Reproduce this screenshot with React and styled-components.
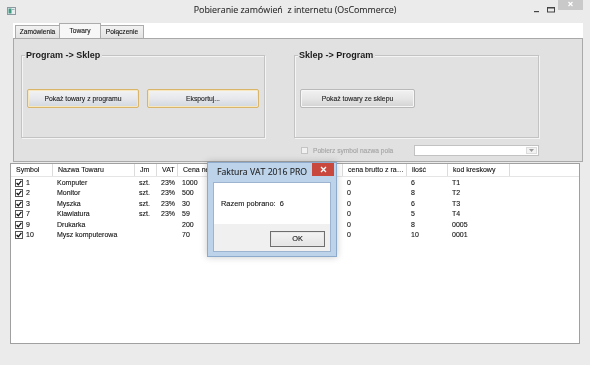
import React from "react";
import styled, { createGlobalStyle } from "styled-components";

const GlobalStyle = createGlobalStyle`
  html, body {
    margin: 0;
    padding: 0;
    background: #ebebeb;
  }
  body {
    font-family: "Liberation Sans", Arial, sans-serif;
    color: #111;
  }
`;

const Window = styled.div`
  position: relative;
  width: 590px;
  height: 365px;
  background: #ebebeb;
  display: flex;
  flex-direction: column;
  overflow: hidden;
  will-change: transform;
  -webkit-text-stroke: 0.1px currentColor;
`;

const TitleBar = styled.div`
  height: 23px;
  display: flex;
  align-items: flex-start;
  flex-shrink: 0;
`;

const TitleSide = styled.div`
  flex: 1;
  display: flex;
  justify-content: ${(p) => (p.$end ? "flex-end" : "flex-start")};
  align-items: flex-start;
  padding: ${(p) => (p.$end ? "0 7px 0 0" : "7px 0 0 7px")};
`;

const TitleText = styled.div`
  font-family: "Open Sans", "Noto Sans", sans-serif;
  font-size: 8.9px;
  line-height: 20px;
  color: #2a2a2a;
  white-space: pre;
`;

const CaptionBtn = styled.div`
  width: ${(p) => p.$w}px;
  height: 10px;
  display: flex;
  align-items: flex-start;
  justify-content: center;
  background: ${(p) => p.$bg || "transparent"};
`;

const Client = styled.div`
  flex: 1;
  display: flex;
  flex-direction: column;
  padding: 0 5px 0 8px;
`;

const TabControl = styled.div`
  margin: 0 2px 0 5px;
  display: flex;
  flex-direction: column;
`;

const TabStrip = styled.div`
  height: 15px;
  background: #fff;
  display: flex;
  align-items: flex-end;
  padding-left: 2px;
`;

const Tab = styled.div`
  width: ${(p) => p.$w}px;
  height: ${(p) => (p.$active ? 15 : 13)}px;
  box-sizing: border-box;
  border: 1px solid #acacac;
  border-bottom: none;
  margin-right: -1px;
  background: ${(p) =>
    p.$active ? "#f7f7f7" : "linear-gradient(#f2f2f2, #e3e3e3)"};
  font-size: 6.6px;
  line-height: ${(p) => (p.$active ? 14 : 12)}px;
  text-align: center;
  position: relative;
  z-index: ${(p) => (p.$active ? 1 : 0)};
`;

const TabPanel = styled.div`
  height: 124px;
  box-sizing: border-box;
  border: 1px solid #a9a9a9;
  background: #e1e1e1;
  padding: 16px 0 0 7px;
  display: flex;
  gap: 29px;
`;

const GroupCol = styled.div`
  display: flex;
  flex-direction: column;
`;

const GroupBox = styled.div`
  position: relative;
  width: ${(p) => p.$w}px;
  height: 83px;
  box-sizing: border-box;
  border: 1px solid #c3c3c3;
  box-shadow: inset 1px 1px 0 #f4f4f4, 1px 1px 0 #f4f4f4;
  padding: 33px 0 0 5px;
  display: flex;
  gap: 8px;
  align-items: flex-start;
`;

const GroupTitle = styled.div`
  position: absolute;
  top: -7px;
  left: 3px;
  padding: 0 2px 0 1px;
  background: #e1e1e1;
  font-size: 9px;
  font-weight: bold;
  line-height: 12px;
  color: #1b1b1b;
  -webkit-text-stroke: 0;
`;

const Button = styled.div`
  width: ${(p) => p.$w}px;
  height: 19px;
  box-sizing: border-box;
  border: 1px solid ${(p) => (p.$accent ? "#d8b56a" : "#b9b9b9")};
  border-radius: 2px;
  background: ${(p) =>
    p.$accent
      ? "linear-gradient(#f3f3f3 0%, #e6e8ec 50%, #d1d6df 100%)"
      : "linear-gradient(#f2f2f2 0%, #e6e6e6 50%, #d3d3d3 100%)"};
  box-shadow: inset 0 0 0 1px ${(p) => (p.$accent ? "#f6e7bf" : "#f6f6f6")};
  font-size: 6.8px;
  line-height: 17px;
  text-align: center;
  color: #1a1a1a;
  white-space: nowrap;
`;

const OptionsRow = styled.div`
  margin-top: 7px;
  display: flex;
  align-items: center;
  justify-content: space-between;
  padding-left: 7px;
  height: 11px;
`;

const DisabledCheck = styled.label`
  display: flex;
  align-items: center;
  gap: 5px;
  font-size: 6.6px;
  color: #a3a3a3;
`;

const CheckSquare = styled.span`
  width: ${(p) => p.$size}px;
  height: ${(p) => p.$size}px;
  box-sizing: border-box;
  border: 1px solid ${(p) => (p.$disabled ? "#c4c4c4" : "#555")};
  background: ${(p) => (p.$disabled ? "#f1f1f1" : "#fff")};
  display: inline-flex;
  align-items: center;
  justify-content: center;
  flex-shrink: 0;
`;

const Combo = styled.div`
  width: 125px;
  height: 11px;
  box-sizing: border-box;
  border: 1px solid #c2c2c2;
  background: #fff;
  display: flex;
  justify-content: flex-end;
  align-items: stretch;
`;

const ComboArrow = styled.div`
  width: 9px;
  margin: 1px;
  border: 1px solid #dcdcdc;
  background: #f2f2f2;
  display: flex;
  align-items: center;
  justify-content: center;
`;

const ListView = styled.div`
  margin: 1px 5px 0 2px;
  height: 181px;
  box-sizing: border-box;
  border: 1px solid #a0a0a0;
  background: #fff;
  display: flex;
  flex-direction: column;
`;

const HeaderRow = styled.div`
  display: flex;
  height: 13px;
  box-sizing: border-box;
  border-bottom: 1px solid #e5e5e5;
`;

const HeaderCell = styled.div`
  width: ${(p) => p.$w}px;
  flex-shrink: 0;
  box-sizing: border-box;
  border-right: 1px solid #dcdcdc;
  padding-left: 5px;
  font-size: 7px;
  line-height: 12px;
  white-space: nowrap;
  overflow: hidden;
  text-overflow: ellipsis;
`;

const Rows = styled.div`
  display: flex;
  flex-direction: column;
  padding-top: 0.5px;
`;

const Row = styled.div`
  display: flex;
  height: 10.5px;
  align-items: center;
`;

const Cell = styled.div`
  width: ${(p) => p.$w}px;
  flex-shrink: 0;
  box-sizing: border-box;
  padding-left: 4px;
  font-size: 7px;
  line-height: 10px;
  white-space: nowrap;
  overflow: hidden;
  display: flex;
  align-items: center;
  gap: 3px;
`;

const Dialog = styled.div`
  position: absolute;
  left: 207px;
  top: 162px;
  width: 130px;
  height: 95px;
  box-sizing: border-box;
  background: #bcd3ea;
  border: 1px solid #8da9cb;
  box-shadow: 0 0 7px rgba(0, 0, 0, 0.22);
  padding: 0 5px 4px 5px;
  display: flex;
  flex-direction: column;
`;

const DialogCaption = styled.div`
  height: 19px;
  display: flex;
  align-items: flex-start;
  justify-content: space-between;
  flex-shrink: 0;
`;

const DialogTitle = styled.div`
  font-family: "Open Sans", "Noto Sans", sans-serif;
  font-size: 8.7px;
  line-height: 19px;
  padding-left: 4px;
  color: #222;
  white-space: nowrap;
`;

const DialogClose = styled.div`
  width: 22px;
  height: 13px;
  margin-right: -3px;
  background: #c9483d;
  display: flex;
  align-items: center;
  justify-content: center;
`;

const DialogBody = styled.div`
  flex: 1;
  display: flex;
  flex-direction: column;
  border: 1px solid #9db4d0;
  background: #f0f0f0;
`;

const MessageArea = styled.div`
  height: 41px;
  background: #fff;
  padding-left: 7px;
  font-size: 7.4px;
  line-height: 42px;
  white-space: pre;
`;

const ButtonArea = styled.div`
  flex: 1;
  display: flex;
  justify-content: flex-end;
  align-items: flex-start;
  padding: 7px 5px 0 0;
`;

const OkButton = styled.div`
  width: 55px;
  height: 16px;
  box-sizing: border-box;
  border: 1px solid #6e6e6e;
  box-shadow: inset 0 0 0 1px #e8e8e8;
  background: linear-gradient(#f4f4f4, #e4e4e4);
  font-size: 7.4px;
  line-height: 14px;
  text-align: center;
`;

const columns = [
  { label: "Symbol", w: 42 },
  { label: "Nazwa Towaru", w: 82 },
  { label: "Jm", w: 22 },
  { label: "VAT", w: 21 },
  { label: "Cena netto", w: 62 },
  { label: "cena netto z rabatem", w: 103 },
  { label: "cena brutto z rabatem", w: 64 },
  { label: "ilość", w: 41 },
  { label: "kod kreskowy", w: 62 },
];

const items = [
  ["1", "Komputer", "szt.", "23%", "1000", "0", "0", "6", "T1"],
  ["2", "Monitor", "szt.", "23%", "500", "0", "0", "8", "T2"],
  ["3", "Myszka", "szt.", "23%", "30", "0", "0", "6", "T3"],
  ["7", "Klawiatura", "szt.", "23%", "59", "0", "0", "5", "T4"],
  ["9", "Drukarka", "", "", "200", "0", "0", "8", "0005"],
  ["10", "Mysz komputerowa", "", "", "70", "0", "0", "10", "0001"],
];

const CheckMark = () => (
  <svg width="6" height="6" viewBox="0 0 6 6">
    <path d="M0.6 3 L2.3 4.8 L5.4 0.9" fill="none" stroke="#111" strokeWidth="1.3" />
  </svg>
);

const AppIcon = () => (
  <svg width="9" height="8" viewBox="0 0 9 8">
    <rect x="0.5" y="0.5" width="8" height="7" fill="#e8eef0" stroke="#8a9aa0" />
    <rect x="1.5" y="1.5" width="3" height="5" fill="#3f9c83" />
    <rect x="5" y="2" width="2.5" height="1" fill="#9fb0b6" />
  </svg>
);

const CrossIcon = () => (
  <svg width="7" height="7" viewBox="0 0 7 7">
    <path d="M1 1 L6 6 M6 1 L1 6" stroke="#fff" strokeWidth="1.3" />
  </svg>
);

export default function App() {
  return (
    <>
      <GlobalStyle />
      <Window>
        <TitleBar>
          <TitleSide>
            <AppIcon />
          </TitleSide>
          <TitleText>Pobieranie zamówień  z internetu (OsCommerce)</TitleText>
          <TitleSide $end>
            <CaptionBtn $w={14}>
              <svg width="6" height="13" viewBox="0 0 6 13">
                <rect x="0" y="11" width="5" height="1.2" fill="#444" />
              </svg>
            </CaptionBtn>
            <CaptionBtn $w={14}>
              <svg width="8" height="13" viewBox="0 0 8 13">
                <rect x="0.5" y="7.5" width="7" height="4.5" fill="none" stroke="#444" />
                <rect x="0.5" y="7" width="7" height="1.5" fill="#444" />
              </svg>
            </CaptionBtn>
            <CaptionBtn $w={25} $bg="#c9c9c9">
              <svg width="7" height="10" viewBox="0 0 7 10">
                <path d="M1.5 2 L5.5 6 M5.5 2 L1.5 6" stroke="#fff" strokeWidth="1.2" />
              </svg>
            </CaptionBtn>
          </TitleSide>
        </TitleBar>

        <Client>
          <TabControl>
            <TabStrip>
              <Tab $w={45}>Zamówienia</Tab>
              <Tab $w={42} $active>Towary</Tab>
              <Tab $w={44}>Połączenie</Tab>
            </TabStrip>
            <TabPanel>
              <GroupCol>
                <GroupBox $w={244}>
                  <GroupTitle>Program -&gt; Sklep</GroupTitle>
                  <Button $w={112} $accent>Pokaż towary z programu</Button>
                  <Button $w={112} $accent>Eksportuj...</Button>
                </GroupBox>
              </GroupCol>
              <GroupCol>
                <GroupBox $w={245}>
                  <GroupTitle>Sklep -&gt; Program</GroupTitle>
                  <Button $w={115}>Pokaż towary ze sklepu</Button>
                </GroupBox>
                <OptionsRow>
                  <DisabledCheck>
                    <CheckSquare $size={7} $disabled />
                    Pobierz symbol nazwa pola
                  </DisabledCheck>
                  <Combo>
                    <ComboArrow>
                      <svg width="5" height="3" viewBox="0 0 5 3">
                        <path d="M0 0 L5 0 L2.5 3 Z" fill="#9a9a9a" />
                      </svg>
                    </ComboArrow>
                  </Combo>
                </OptionsRow>
              </GroupCol>
            </TabPanel>
          </TabControl>

          <ListView>
            <HeaderRow>
              {columns.map((c) => (
                <HeaderCell key={c.label} $w={c.w}>
                  {c.label}
                </HeaderCell>
              ))}
            </HeaderRow>
            <Rows>
              {items.map((row) => (
                <Row key={row[0]}>
                  {row.map((v, i) => (
                    <Cell key={i} $w={columns[i].w}>
                      {i === 0 && (
                        <CheckSquare $size={8}>
                          <CheckMark />
                        </CheckSquare>
                      )}
                      {v}
                    </Cell>
                  ))}
                </Row>
              ))}
            </Rows>
          </ListView>
        </Client>

        <Dialog>
          <DialogCaption>
            <DialogTitle>Faktura VAT 2016 PRO</DialogTitle>
            <DialogClose>
              <CrossIcon />
            </DialogClose>
          </DialogCaption>
          <DialogBody>
            <MessageArea>Razem pobrano:  6</MessageArea>
            <ButtonArea>
              <OkButton>OK</OkButton>
            </ButtonArea>
          </DialogBody>
        </Dialog>
      </Window>
    </>
  );
}
